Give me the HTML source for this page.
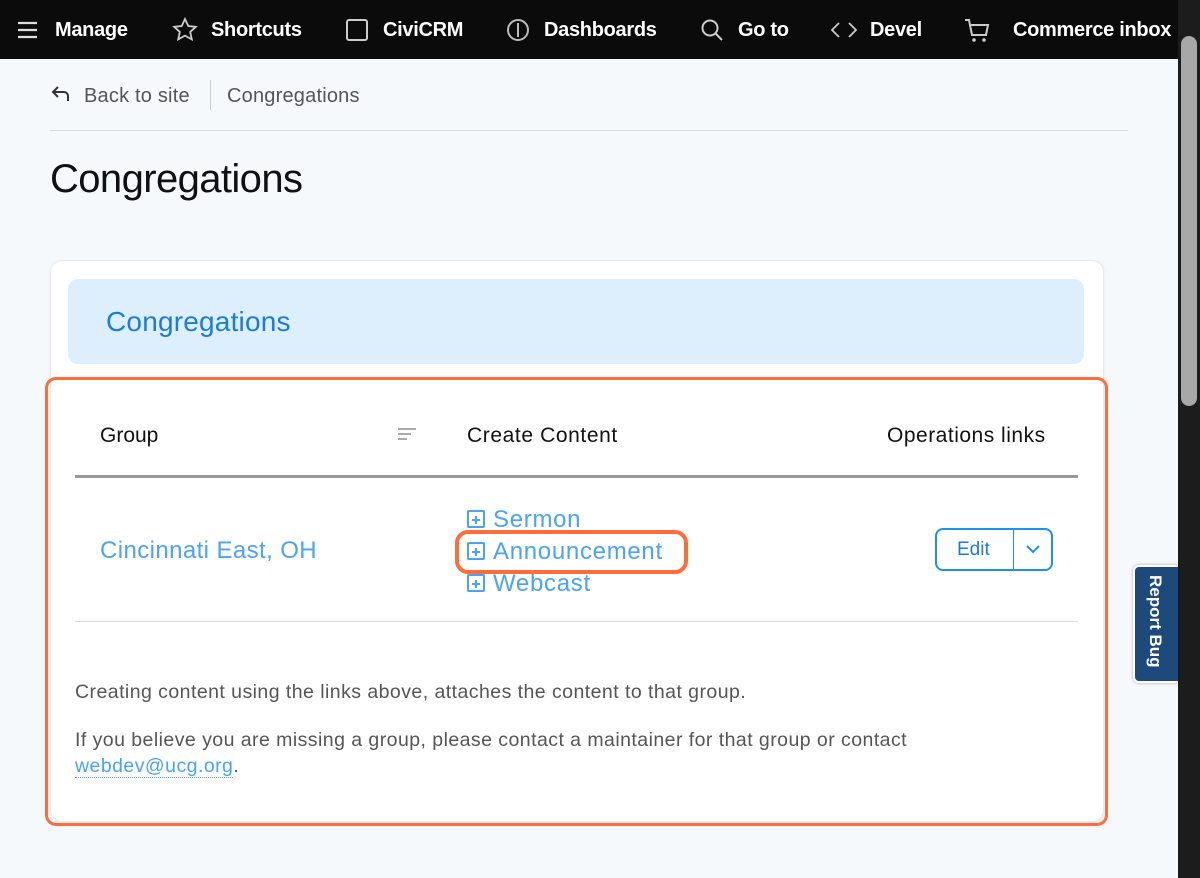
<!DOCTYPE html>
<html><head><meta charset="utf-8"><style>
*{margin:0;padding:0;box-sizing:border-box}
body{width:1200px;height:878px;overflow:hidden;background:#f6f9fc;font-family:"Liberation Sans",Arial,sans-serif;position:relative}
.a{position:absolute}
.top{left:0;top:0;width:1178px;height:59px;background:#0b0b0b;color:#fff;font-weight:bold;font-size:20px}
.top span{position:absolute;top:19px;letter-spacing:-0.3px}
.sb{left:1178px;top:0;width:22px;height:878px;background:#1c1c1c}
.thumb{left:1181px;top:36px;width:16px;height:370px;background:#a8a8a8;border-radius:8px}
.link{color:#4aa3f5}
.plus{display:inline-block;width:18px;height:18px;border:2px solid #4aa3f5;border-radius:2px;position:relative;vertical-align:-1px;margin-right:8px}
.plus:before{content:"";position:absolute;left:3px;top:7px;width:8px;height:2px;background:#4aa3f5}
.plus:after{content:"";position:absolute;left:6px;top:4px;width:2px;height:8px;background:#4aa3f5}
</style></head><body>
<div class="a top">
<svg class="a" style="left:16px;top:20px" width="24" height="20"><path d="M2 3H21M2 10H21M2 17H21" stroke="#ddd" stroke-width="2.2"/></svg>
<span style="left:55px">Manage</span>
<svg class="a" style="left:172px;top:17px" width="26" height="26"><path d="M13 2l3.3 7 7.5.8-5.6 5.1 1.6 7.5L13 18.6 6.2 22.4l1.6-7.5L2.2 9.8 9.7 9z" fill="none" stroke="#ccc" stroke-width="1.8"/></svg>
<span style="left:211px">Shortcuts</span>
<div class="a" style="left:346px;top:19px;width:22px;height:22px;border:2px solid #ccc;border-radius:3px"></div>
<span style="left:383px">CiviCRM</span>
<div class="a" style="left:507px;top:19px;width:22px;height:22px;border:2px solid #bbb;border-radius:50%"></div>
<div class="a" style="left:517px;top:23px;width:2px;height:14px;background:#bbb"></div>
<span style="left:544px">Dashboards</span>
<svg class="a" style="left:700px;top:18px" width="26" height="26"><circle cx="10" cy="10" r="7.5" fill="none" stroke="#ccc" stroke-width="2"/><path d="M15.5 15.5L22 22" stroke="#ccc" stroke-width="2"/></svg>
<span style="left:738px">Go to</span>
<svg class="a" style="left:830px;top:20px" width="28" height="20"><path d="M9 3L2 10l7 7M19 3l7 7-7 7" fill="none" stroke="#ccc" stroke-width="1.8"/></svg>
<span style="left:870px">Devel</span>
<svg class="a" style="left:964px;top:17px" width="28" height="28"><path d="M1 3h4l3 15h14l2-10H7" fill="none" stroke="#ccc" stroke-width="2"/><circle cx="10" cy="23" r="1.8" fill="#ccc"/><circle cx="20" cy="23" r="1.8" fill="#ccc"/></svg>
<span style="left:1013px">Commerce inbox</span>
</div>
<div class="a sb"></div><div class="a thumb"></div>
<svg class="a" style="left:50px;top:84px" width="24" height="20"><path d="M8 3L3 8l5 5M3 8h11a4 4 0 0 1 4 4v5" fill="none" stroke="#333" stroke-width="2"/></svg>
<div class="a" style="left:84px;top:85px;font-size:20px;color:#555;letter-spacing:0.2px">Back to site</div>
<div class="a" style="left:210px;top:80px;width:1px;height:30px;background:#ccc"></div>
<div class="a" style="left:227px;top:85px;font-size:20px;color:#555;letter-spacing:0.2px">Congregations</div>
<div class="a" style="left:50px;top:130px;width:1078px;height:1px;background:#ddd"></div>
<div class="a" style="left:50px;top:157px;font-size:40px;color:#111;letter-spacing:-0.6px">Congregations</div>
<div class="a" style="left:50px;top:260px;width:1054px;height:562px;background:#fff;border:1px solid #e6e8ec;border-radius:12px;box-shadow:0 2px 4px rgba(0,0,0,.06)"></div>
<div class="a" style="left:68px;top:279px;width:1016px;height:85px;background:#ddeefd;border-radius:10px"></div>
<div class="a" style="left:106px;top:306px;font-size:28px;color:#1a7ddb;letter-spacing:0.2px">Congregations</div>
<div class="a" style="left:45px;top:377px;width:1063px;height:449px;border:3px solid #ff6d3a;border-radius:11px"></div>
<div class="a" style="left:100px;top:424px;font-size:21px;color:#111">Group</div>
<svg class="a" style="left:397px;top:427px" width="20" height="16"><path d="M1 2h18M1 7h13M1 12h9" stroke="#aaa" stroke-width="2"/></svg>
<div class="a" style="left:467px;top:424px;font-size:21px;color:#111;letter-spacing:0.6px">Create Content</div>
<div class="a" style="left:887px;top:424px;font-size:21px;color:#111;letter-spacing:0.5px">Operations links</div>
<div class="a" style="left:75px;top:475px;width:1003px;height:3px;background:#999"></div>
<div class="a link" style="left:100px;top:537px;font-size:24px;letter-spacing:0.4px">Cincinnati East, OH</div>
<div class="a link" style="left:467px;top:504px;font-size:24px;line-height:32px;letter-spacing:0.7px"><div><span class="plus"></span>Sermon</div><div><span class="plus"></span>Announcement</div><div><span class="plus"></span>Webcast</div></div>
<div class="a" style="left:455px;top:530px;width:233px;height:44px;border:4px solid #ff6d3a;border-radius:13px"></div>
<div class="a" style="left:935px;top:528px;width:118px;height:43px;border:2px solid #1a93ef;border-radius:8px"></div>
<div class="a" style="left:1013px;top:530px;width:1px;height:39px;background:#1a93ef"></div>
<div class="a" style="left:957px;top:539px;font-size:19px;color:#1a7ddb">Edit</div>
<svg class="a" style="left:1025px;top:543px" width="16" height="12"><path d="M2 3l6 6 6-6" fill="none" stroke="#1a93ef" stroke-width="2"/></svg>
<div class="a" style="left:75px;top:621px;width:1003px;height:1px;background:#ddd"></div>
<div class="a" style="left:75px;top:681px;font-size:19.5px;color:#555;letter-spacing:0.45px">Creating content using the links above, attaches the content to that group.</div>
<div class="a" style="left:75px;top:727px;font-size:19.5px;color:#555;line-height:26px;letter-spacing:0.45px">If you believe you are missing a group, please contact a maintainer for that group or contact<br><span style="color:#4aa3f5;border-bottom:1px dotted #4aa3f5">webdev@ucg.org</span>.</div>
<div class="a" style="left:1133px;top:565px;width:45px;height:118px;background:#1d4a7a;border:2px solid #fff;border-right:none;border-radius:6px 0 0 6px;box-shadow:0 0 3px rgba(0,0,0,.3)"></div>
<div class="a" style="left:1145px;top:575px;writing-mode:vertical-rl;color:#fff;font-weight:bold;font-size:17px">Report Bug</div>
</body></html>
